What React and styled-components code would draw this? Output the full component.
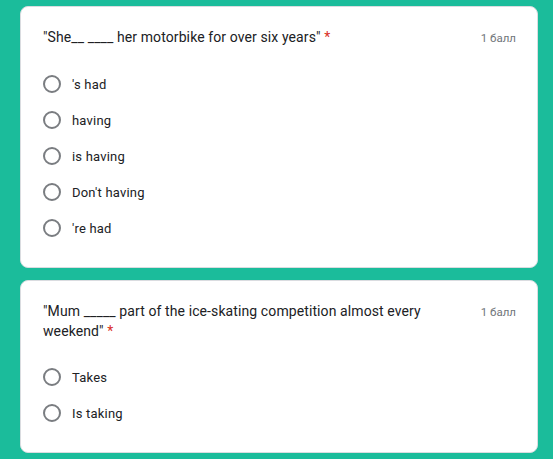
import React from "react";
import styled, { createGlobalStyle } from "styled-components";

const Global = createGlobalStyle`
  html, body { margin: 0; padding: 0; background: #1bbc9b; }
  body { font-family: Roboto, "Noto Sans", Arial, sans-serif; }
`;

const Page = styled.div`
  display: flex;
  flex-direction: column;
  gap: 12px;
  padding: 6px 15px 0 20px;
`;

const Card = styled.div`
  background: #fff;
  border: 1px solid #dadce0;
  border-radius: 8px;
  padding: 20px 21px 21px 22px;
  display: flex;
  flex-direction: column;
  gap: 18px;
`;

const Header = styled.div`
  display: flex;
  align-items: flex-start;
  justify-content: space-between;
  gap: 40px;
`;

const Title = styled.div`
  font-size: 14px;
  line-height: 20px;
  color: #202124;
  letter-spacing: 0.1px;
  max-width: 400px;
`;

const Required = styled.span`
  color: #d93025;
`;

const Points = styled.div`
  font-size: 11.5px;
  line-height: 20px;
  color: #70757a;
  white-space: nowrap;
  padding-top: 1px;
`;

const Options = styled.div`
  display: flex;
  flex-direction: column;
`;

const Option = styled.label`
  display: flex;
  align-items: center;
  height: 36px;
  gap: 11px;
  font-size: 13px;
  color: #202124;
  letter-spacing: 0.2px;
  cursor: pointer;
`;

const Radio = styled.span`
  box-sizing: border-box;
  width: 18px;
  height: 18px;
  border: 2px solid #7a7d81;
  border-radius: 50%;
  flex-shrink: 0;
`;

const questions = [
  {
    title: '"She__ ____ her motorbike for over six years"',
    options: ["'s had", "having", "is having", "Don't having", "'re had"],
  },
  {
    title: '"Mum _____ part of the ice-skating competition almost every weekend"',
    options: ["Takes", "Is taking"],
  },
];

export default function App() {
  return (
    <>
      <Global />
      <Page>
        {questions.map((q, i) => (
          <Card key={i}>
            <Header>
              <Title>
                {q.title} <Required>*</Required>
              </Title>
              <Points>1 балл</Points>
            </Header>
            <Options>
              {q.options.map((o) => (
                <Option key={o}>
                  <Radio />
                  {o}
                </Option>
              ))}
            </Options>
          </Card>
        ))}
      </Page>
    </>
  );
}
